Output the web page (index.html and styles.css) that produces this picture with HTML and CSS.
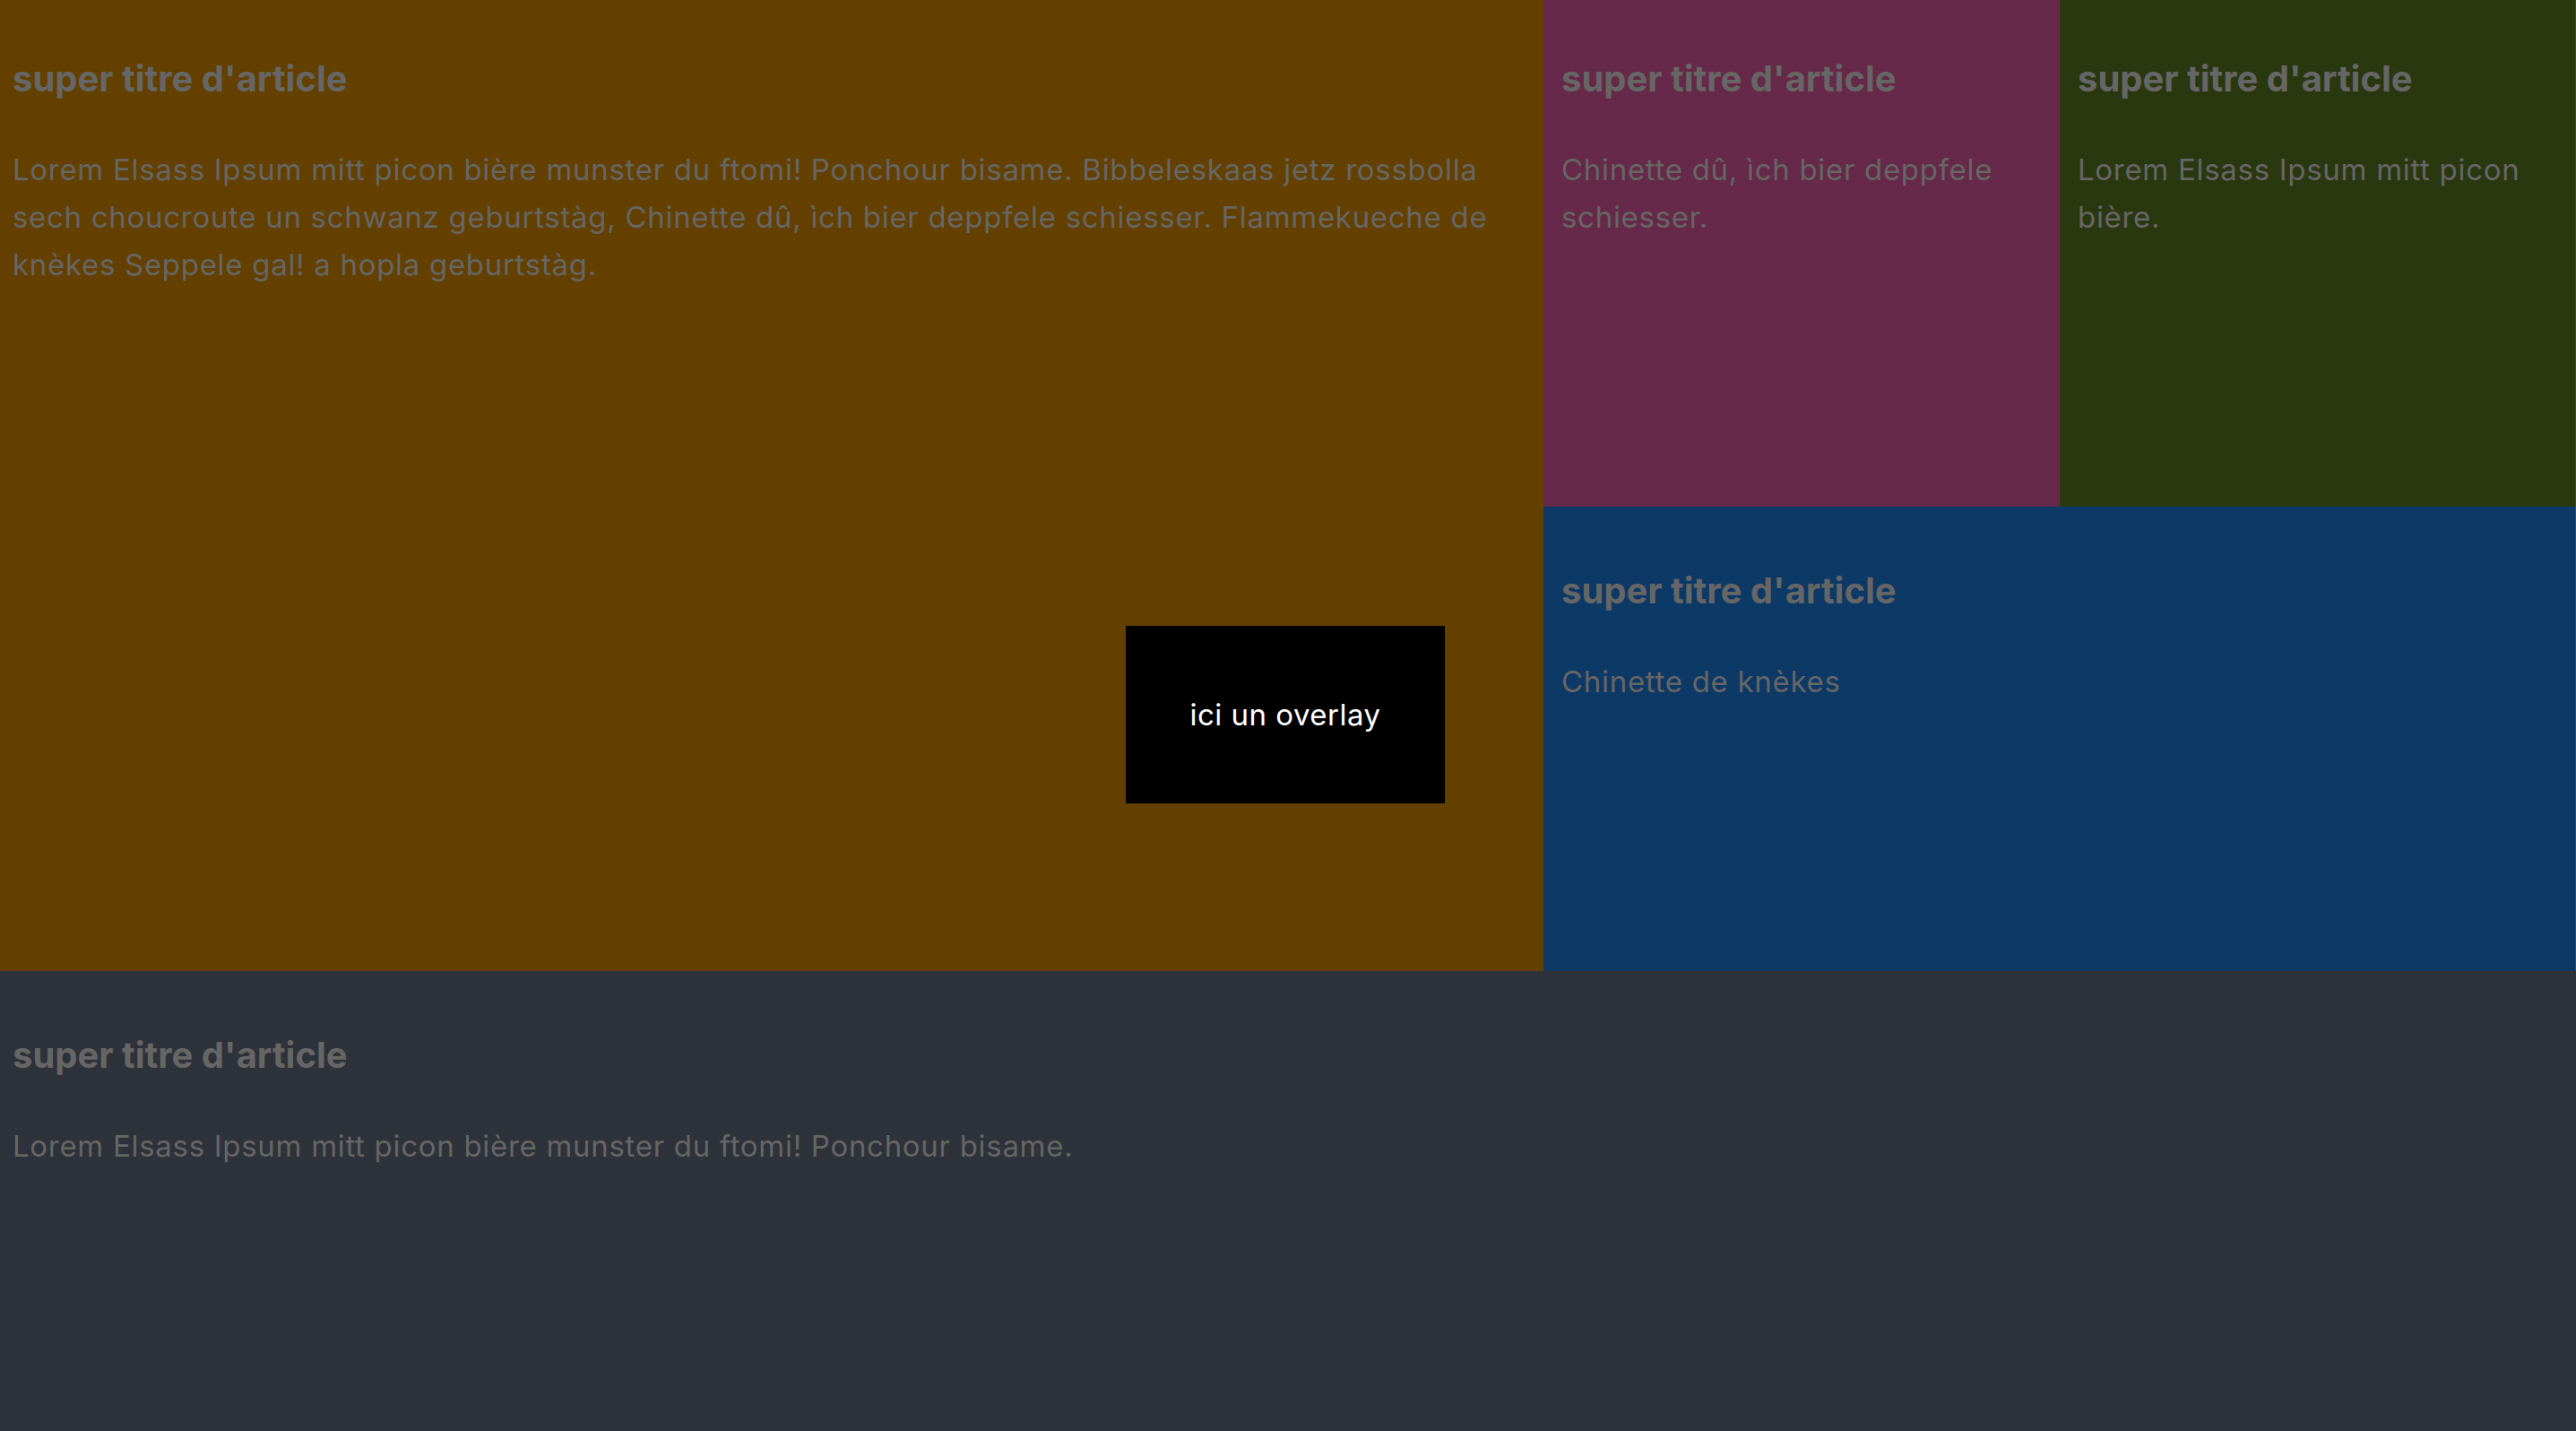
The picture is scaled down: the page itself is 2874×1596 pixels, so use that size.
FILE: index.html
```html
<!DOCTYPE html>
<html lang="fr">
<head>
<meta charset="utf-8">
<title>Articles</title>
<link rel="stylesheet" href="styles.css">
</head>
<body>
<main class="grid">
  <article class="card card-main">
    <h2 class="title">super titre d'article</h2>
    <p class="text">Lorem Elsass Ipsum mitt picon bière munster du ftomi! Ponchour bisame. Bibbeleskaas jetz rossbolla sech choucroute un schwanz geburtstàg, Chinette dû, ìch bier deppfele schiesser. Flammekueche de knèkes Seppele gal! a hopla geburtstàg.</p>
    <div class="overlay">ici un overlay</div>
  </article>
  <article class="card card-pink">
    <h2 class="title">super titre d'article</h2>
    <p class="text">Chinette dû, ìch bier deppfele schiesser.</p>
  </article>
  <article class="card card-green">
    <h2 class="title">super titre d'article</h2>
    <p class="text">Lorem Elsass Ipsum mitt picon bière.</p>
  </article>
  <article class="card card-blue">
    <h2 class="title">super titre d'article</h2>
    <p class="text">Chinette de knèkes</p>
  </article>
  <article class="card card-bottom">
    <h2 class="title">super titre d'article</h2>
    <p class="text">Lorem Elsass Ipsum mitt picon bière munster du ftomi! Ponchour bisame.</p>
  </article>
</main>
</body>
</html>
```

FILE: styles.css
```css
* {
  box-sizing: border-box;
}

html, body {
  margin: 0;
  padding: 0;
  background: #2e323a;
}

body {
  font-family: Inter, "Noto Sans", sans-serif;
  color: #666666;
}

.grid {
  display: grid;
  width: 2874px;
  height: 1596px;
  grid-template-columns: 1722px 576px 576px;
  grid-template-rows: 565px 518px 513px;
}

.card {
  position: relative;
  padding: 70px 20px 0 20px;
  overflow: hidden;
}

.title {
  margin: 0;
  font-size: 40px;
  line-height: 48px;
  font-weight: 700;
}

.text {
  margin: 51px 0 0 0;
  font-size: 33px;
  line-height: 53px;
  font-weight: 400;
  letter-spacing: 0.7px;
}

.card-main {
  grid-column: 1;
  grid-row: 1 / 3;
  background: #634000;
  padding: 64px 40px 0 14px;
}

.card-pink {
  grid-column: 2;
  grid-row: 1;
  background: #66294a;
  padding-top: 64px;
}

.card-green {
  grid-column: 3;
  grid-row: 1;
  background: #2a3810;
  padding-top: 64px;
  border-right: 1px solid #3a4a2a;
}

.card-blue {
  grid-column: 2 / 4;
  grid-row: 2;
  background: #0d3966;
  border-right: 1px solid #2a4a70;
}

.card-bottom {
  grid-column: 1 / 4;
  grid-row: 3;
  background: #2e323a;
  padding-left: 14px;
}

.overlay {
  position: absolute;
  right: 110px;
  bottom: 187px;
  width: 356px;
  height: 198px;
  background: #000000;
  color: #ffffff;
  display: flex;
  align-items: center;
  justify-content: center;
  font-size: 33px;
  line-height: 1;
  letter-spacing: 0.5px;
}
```
